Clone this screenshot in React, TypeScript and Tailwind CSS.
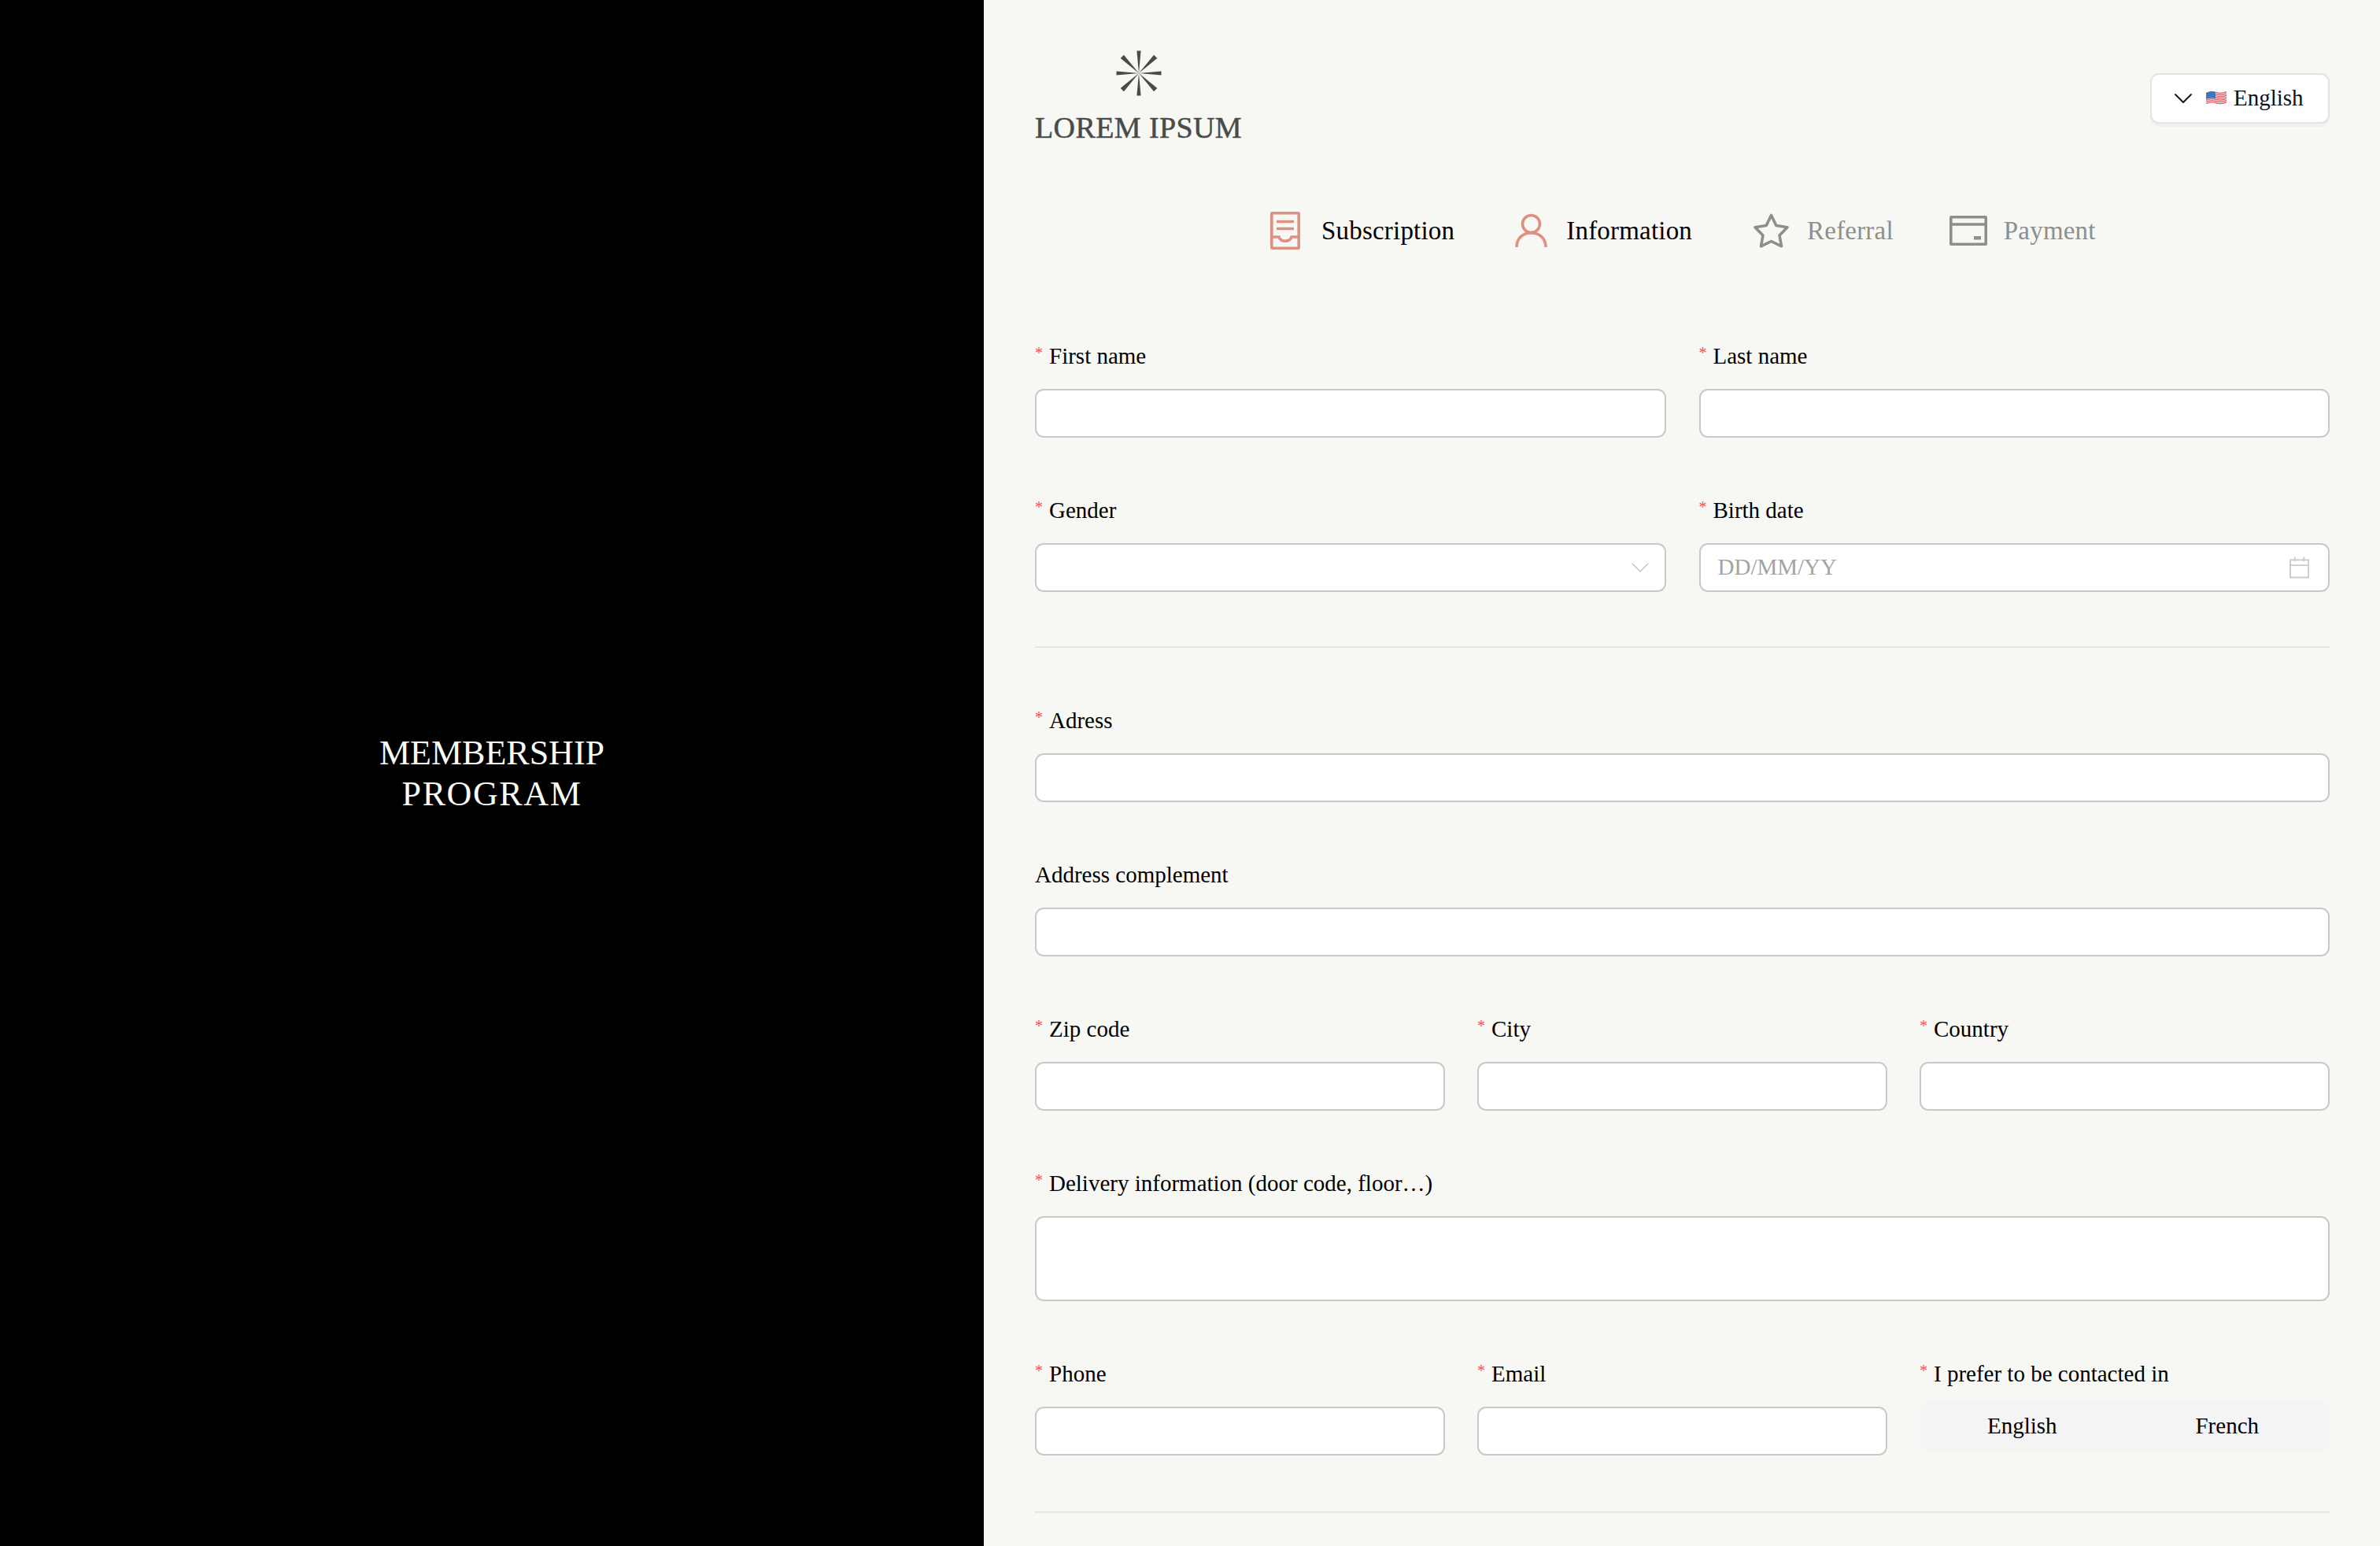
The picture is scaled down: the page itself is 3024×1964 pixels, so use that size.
import type { ReactNode } from "react";
import { ChevronDown } from "lucide-react";

function Logo() {
    const spokes = [0, 45, 90, 135, 180, 225, 270, 315];
    return (
        <svg width="58" height="58" viewBox="-29 -29 58 58" className="text-[#4a4a48]">
            {spokes.map((angle) => (
                <polygon key={angle} points={angle % 90 === 0 ? "-2.6,-28.5 2.6,-28.5 0,0" : "-3,-30 3,-30 0,0"} fill="currentColor" transform={`rotate(${angle})`} />
            ))}
        </svg>
    );
}

function Flag() {
    const stripes = [0, 1, 2, 3, 4, 5, 6];
    return (
        <svg width="26" height="20" viewBox="0 0 26 20">
            <path d="M0 3 Q6 0 13 2 T26 1 V16 Q19 18 13 16 T0 18 Z" fill="#f1f1f1" />
            {stripes.map((i) => (
                <path key={i} d={`M0 ${3.6 + i * 2.2} Q6 ${0.6 + i * 2.2} 13 ${2.6 + i * 2.2} T26 ${1.6 + i * 2.2}`} stroke="#dc5a66" strokeWidth="1.2" fill="none" />
            ))}
            <path d="M0 3 Q6 0 12 1.7 V10 Q6 8.5 0 11 Z" fill="#3f74b5" />
        </svg>
    );
}

function SubscriptionIcon() {
    return (
        <svg width="38" height="48" viewBox="0 0 38 48" fill="none" stroke="#de9180" strokeWidth="3.6">
            <rect x="1.8" y="1.8" width="34.4" height="44.4" rx="0.5" />
            <path d="M8 12.5 H30 M8 21.5 H30" />
            <path d="M2 32 H11 C12.5 39 25.5 39 27 32 H36" />
        </svg>
    );
}

function PersonIcon() {
    return (
        <svg width="41" height="44" viewBox="0 0 41 44" fill="none" stroke="#de9180" strokeWidth="3.6">
            <circle cx="20.5" cy="13.5" r="11" />
            <path d="M2 43 C2 32 9.5 25 20.5 25 C31.5 25 39 32 39 43" />
        </svg>
    );
}

function StarIcon() {
    return (
        <svg width="45" height="44" viewBox="0 0 45 44" fill="none" stroke="#8e8e8c" strokeWidth="3.6" strokeLinejoin="round">
            <path d="M22.5 2.5 L28.8 15.5 L43 17.8 L33 28 L35.5 41.8 L22.5 35.5 L9.5 41.8 L12 28 L2 17.8 L16.2 15.5 Z" />
        </svg>
    );
}

function CardIcon() {
    return (
        <svg width="48" height="38" viewBox="0 0 48 38" fill="none" stroke="#8e8e8c" strokeWidth="3.6">
            <rect x="1.8" y="1.8" width="44.4" height="34.4" rx="0.5" />
            <path d="M2 11 H46" />
            <rect x="31" y="26" width="9" height="4.5" fill="#8e8e8c" stroke="none" />
        </svg>
    );
}

function CalendarIcon() {
    return (
        <svg width="26" height="28" viewBox="0 0 26 28" fill="none" stroke="#cbcbcb" strokeWidth="2">
            <rect x="1" y="4" width="24" height="23" />
            <path d="M1 11 H25 M7 0 V6 M19 0 V6" />
        </svg>
    );
}

function Label({ children, required = true }: { children: ReactNode; required?: boolean }) {
    return (
        <label className="flex h-[42px] mb-[21px] items-center text-[29px] leading-none text-black">
            {required && <span className="w-[18px] -mt-[8px] text-[20px] text-[#ff4d4f]">*</span>}
            {children}
        </label>
    );
}

const boxClass = "w-full h-[62px] rounded-[11px] border-2 border-[#c9c9c9] bg-white";

function Field({ label, required }: { label: string; required?: boolean }) {
    return (
        <div>
            <Label required={required}>{label}</Label>
            <input className={boxClass} />
        </div>
    );
}

function Tab({ icon, text, active, gap }: { icon: ReactNode; text: string; active?: boolean; gap: string }) {
    return (
        <div className={`flex items-center ${gap}`}>
            {icon}
            <span className={active ? "text-[33px] leading-none tracking-[0.2px] text-black" : "text-[33px] leading-none tracking-[0.2px] text-[#8e8e8c]"}>{text}</span>
        </div>
    );
}

export default function App() {
    return (
        <div className="flex h-[1964px] overflow-hidden bg-[#f7f8f3] font-['Liberation_Serif',serif]">
            <aside className="flex w-[1250px] shrink-0 items-center justify-center bg-black">
                <h1 className="mt-[2px] text-center text-[44px] font-normal leading-[52px] text-[#fafaf5]">
                    MEMBERSHIP
                    <span className="block tracking-[1.6px]">PROGRAM</span>
                </h1>
            </aside>

            <main className="flex-1 pl-[65px] pr-[64px]">
                <header className="flex items-start justify-between pt-[64px]">
                    <div className="flex flex-col items-center">
                        <Logo />
                        <span className="mt-[21px] text-[38px] leading-[38px] tracking-[0.4px] text-[#4a4a48] [-webkit-text-stroke:0.5px_#4a4a48]">LOREM IPSUM</span>
                    </div>
                    <button className="mt-[29px] flex h-[64px] w-[228px] items-center rounded-[11px] border-2 border-[#e3e3e1] bg-white pl-[20px] text-[29px] text-[#111] shadow-[0_4px_0_rgba(0,0,0,0.03)]">
                        <ChevronDown size={40} strokeWidth={1.1} />
                        <span className="ml-[9px] mr-[9px]"><Flag /></span>
                        English
                    </button>
                </header>

                <nav className="mt-[88px] ml-[299px] flex items-center">
                    <Tab icon={<SubscriptionIcon />} text="Subscription" active gap="gap-[27px]" />
                    <div className="ml-[77px]"><Tab icon={<PersonIcon />} text="Information" active gap="gap-[24px]" /></div>
                    <div className="ml-[78px]"><Tab icon={<StarIcon />} text="Referral" gap="gap-[23px]" /></div>
                    <div className="ml-[71px]"><Tab icon={<CardIcon />} text="Payment" gap="gap-[21px]" /></div>
                </nav>

                <form className="mt-[114px] flex flex-col gap-[71px]">
                    <div className="grid grid-cols-2 gap-x-[42px]">
                        <Field label="First name" required />
                        <Field label="Last name" required />
                    </div>
                    <div className="grid grid-cols-2 gap-x-[42px]">
                        <div>
                            <Label>Gender</Label>
                            <div className={`${boxClass} flex items-center justify-end pr-[11px]`}>
                                <ChevronDown size={40} strokeWidth={0.9} className="text-[#c4c4c4]" />
                            </div>
                        </div>
                        <div>
                            <Label>Birth date</Label>
                            <div className={`${boxClass} flex items-center justify-between pl-[22px] pr-[24px]`}>
                                <input placeholder="DD/MM/YY" className="w-full bg-transparent text-[29px] placeholder:text-[#a3a3a3]" />
                                <CalendarIcon />
                            </div>
                        </div>
                    </div>
                    <hr className="-mt-[2px] border-t-2 border-[#e4e4e1]" />
                    <Field label="Adress" required />
                    <Field label="Address complement" required={false} />
                    <div className="grid grid-cols-3 gap-x-[41px]">
                        <Field label="Zip code" required />
                        <Field label="City" required />
                        <Field label="Country" required />
                    </div>
                    <div>
                        <Label>Delivery information (door code, floor…)</Label>
                        <textarea className="block h-[108px] w-full resize-none rounded-[11px] border-2 border-[#c9c9c9] bg-white" />
                    </div>
                    <div className="grid grid-cols-3 gap-x-[41px]">
                        <Field label="Phone" required />
                        <Field label="Email" required />
                        <div>
                            <Label>I prefer to be contacted in</Label>
                            <div className="-mt-[7px] grid h-[64px] grid-cols-2 items-center rounded-[12px] bg-[#f4f4f4] text-center text-[29px] text-black">
                                <span>English</span>
                                <span>French</span>
                            </div>
                        </div>
                    </div>
                    <hr className="border-t-2 border-[#e4e4e1]" />
                </form>
            </main>
        </div>
    );
}
